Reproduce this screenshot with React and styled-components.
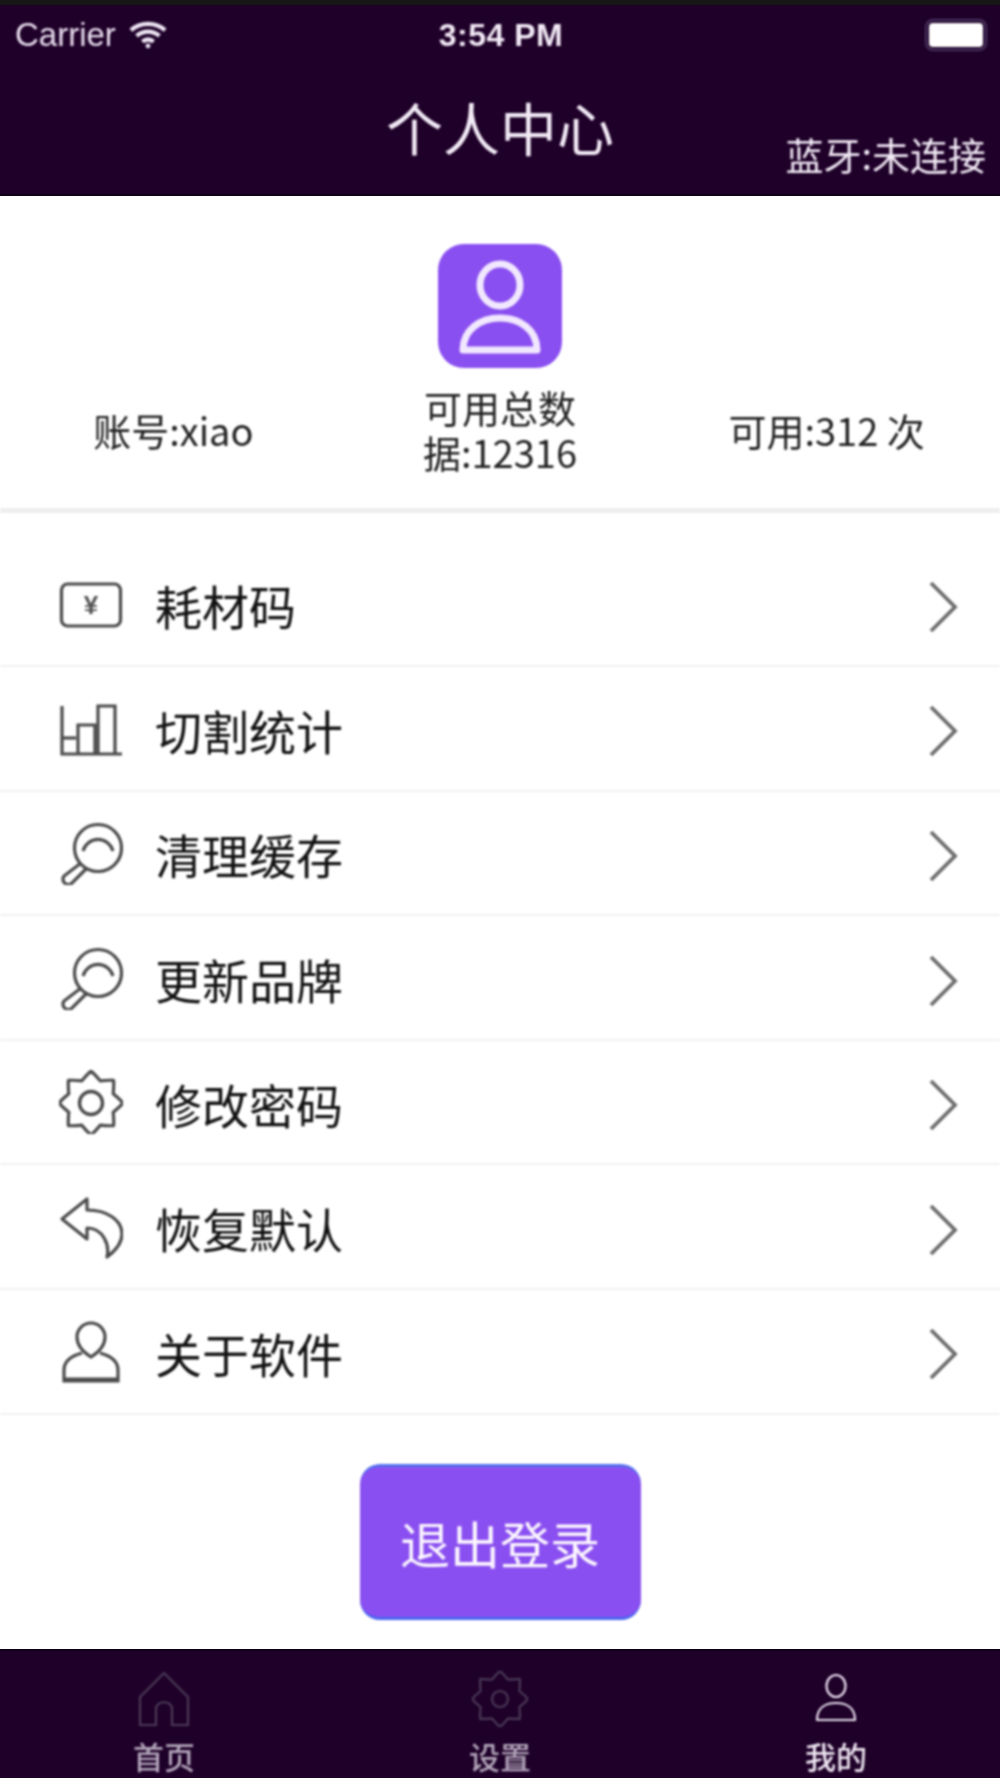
import React from 'react'
import styled, {createGlobalStyle, css} from 'styled-components'

const GlobalStyle = createGlobalStyle`
    html, body {
        margin: 0;
        padding: 0;
        background: #fff;
    }
    * {
        box-sizing: border-box;
    }
`

const CJK = `"Noto Sans CJK SC", "Liberation Sans", sans-serif`
const NAVY = '#1f0029'
const PURPLE = '#8a4ff0'

// the screenshot is an upscaled one, everything in it is a bit soft
const soft = css`
    filter: blur(0.9px);
`

const gearPath = (cx, cy, outer, inner, teeth) => {
    const step = (Math.PI * 2) / teeth
    const at = (r, a) => `${(cx + r * Math.cos(a)).toFixed(1)} ${(cy + r * Math.sin(a)).toFixed(1)}`
    const shoulder = inner + (outer - inner) * 0.6
    let d = ''
    for (let i = 0; i < teeth; i++) {
        const a = -Math.PI / 2 + i * step
        d += `${i === 0 ? 'M' : 'L'}${at(outer, a)} `
        d += `Q${at(shoulder, a + step * 0.18)} ${at(inner, a + step * 0.5)} `
        d += `Q${at(shoulder, a + step * 0.82)} ${at(outer, a + step)} `
    }
    return d + 'Z'
}

const TicketIcon = () => (
    <IconSvg viewBox="0 0 64 64">
        <rect x="2.5" y="12" width="59" height="42" rx="6" />
        <text x="32" y="42" textAnchor="middle" fontSize="26" fontWeight="700" fill="#555" stroke="none" fontFamily="Liberation Sans, sans-serif">¥</text>
    </IconSvg>
)

const BarsIcon = () => (
    <IconSvg viewBox="0 0 64 64">
        <path d="M3 10V58H63" />
        <path d="M3 42H17" />
        <path d="M19 58V29H36V58" />
        <path d="M39 58V10H56V58" />
    </IconSvg>
)

const SearchIcon = () => (
    <IconSvg viewBox="0 0 64 64">
        <circle cx="39" cy="27" r="23.5" />
        <path d="M24 30A15.5 15.5 0 0 1 54 30" />
        <path d="M22 42L5 55A5.5 5.5 0 0 0 12 63L27 48" />
    </IconSvg>
)

const GearIcon = () => (
    <IconSvg viewBox="0 0 64 64">
        <path d={gearPath(32, 33, 32, 24, 8)} strokeLinejoin="round" />
        <circle cx="32" cy="33" r="11.5" strokeWidth="3.4" />
    </IconSvg>
)

const BackIcon = () => (
    <IconSvg viewBox="0 0 64 64">
        <path d="M3 24L28 4V15C48 15 63 25 63 39C63 49 56 56 48 62C51 50 44 33 28 33V44Z" strokeLinejoin="round" />
    </IconSvg>
)

const PersonIcon = () => (
    <IconSvg viewBox="0 0 64 64">
        <path d="M32 38C24 33 18 27 18 18A14 14 0 0 1 46 18C46 27 40 33 32 38Z" />
        <path d="M23 34C12 37 5 42 5 51V62H59V51C59 42 52 37 41 34" />
        <path d="M5 60.5H59" strokeWidth="4" />
    </IconSvg>
)

const MENU = [
    {label: '耗材码', icon: <TicketIcon />},
    {label: '切割统计', icon: <BarsIcon />},
    {label: '清理缓存', icon: <SearchIcon />},
    {label: '更新品牌', icon: <SearchIcon />},
    {label: '修改密码', icon: <GearIcon />},
    {label: '恢复默认', icon: <BackIcon />},
    {label: '关于软件', icon: <PersonIcon />},
]

const App = () => {
    return (
        <Page>
            <GlobalStyle />
            <TopBar>
                <StatusBar>
                    <Carrier>
                        Carrier
                        <svg width="38" height="30" viewBox="0 0 40 30" fill="none" stroke="#efe6f5" strokeWidth="4.5">
                            <path d="M2 10C12 1 28 1 38 10" />
                            <path d="M8 16C15 10 25 10 32 16" />
                            <path d="M14 22C18 19 22 19 26 22" />
                            <circle cx="20" cy="26.5" r="2.5" fill="#efe6f5" stroke="none" />
                        </svg>
                    </Carrier>
                    <Clock>3:54 PM</Clock>
                    <Battery><BatteryLevel /></Battery>
                </StatusBar>
                <Title>个人中心</Title>
                <Bluetooth>蓝牙:未连接</Bluetooth>
            </TopBar>

            <Profile>
                <Avatar>
                    <svg width="124" height="124" viewBox="0 0 124 124" fill="none" stroke="#f1e8ff" strokeWidth="7">
                        <ellipse cx="62" cy="41" rx="20" ry="21" />
                        <path d="M25 106C25 86 42 74 62 74C82 74 99 86 99 106Z" strokeLinejoin="round" />
                    </svg>
                </Avatar>
                <Stats>
                    <Stat>账号:xiao</Stat>
                    <Stat><StatWrap>可用总数据:12316</StatWrap></Stat>
                    <Stat>可用:312 次</Stat>
                </Stats>
            </Profile>

            <Menu>
                {MENU.map(item => (
                    <MenuRow key={item.label}>
                        <IconSlot>{item.icon}</IconSlot>
                        <MenuLabel>{item.label}</MenuLabel>
                        <Chevron viewBox="0 0 30 52">
                            <path d="M3 2L27 26L3 50" />
                        </Chevron>
                    </MenuRow>
                ))}
            </Menu>

            <LogoutArea>
                <LogoutButton>退出登录</LogoutButton>
            </LogoutArea>

            <TabBar>
                <Tab>
                    <TabIcon viewBox="0 0 56 56" stroke="#4b3a57">
                        <path d="M28 2L4 26V54H20V38C20 29 36 29 36 38V54H52V26Z" strokeLinejoin="round" />
                    </TabIcon>
                    <TabLabel>首页</TabLabel>
                </Tab>
                <Tab>
                    <TabIcon viewBox="0 0 56 56" stroke="#4b3a57">
                        <path d={gearPath(28, 28, 28, 21, 8)} strokeLinejoin="round" />
                        <circle cx="28" cy="28" r="8" />
                    </TabIcon>
                    <TabLabel>设置</TabLabel>
                </Tab>
                <Tab>
                    <TabIcon viewBox="0 0 56 56" stroke="#eadff0" strokeWidth="6">
                        <ellipse cx="28" cy="15" rx="9.5" ry="11" />
                        <path d="M9 49C9 37 17 32 28 32C39 32 47 37 47 49Z" strokeLinejoin="round" />
                    </TabIcon>
                    <TabLabel $active>我的</TabLabel>
                </Tab>
            </TabBar>
        </Page>
    )
}

const Page = styled.div`
    width: 1000px;
    height: 1778px;
    display: flex;
    flex-direction: column;
    overflow: hidden;
    background: #fff;
    font-family: ${CJK};
`

const TopBar = styled.header`
    position: relative;
    height: 196px;
    flex: none;
    background: ${NAVY};
    border-top: 5px solid #171717;
    border-bottom: 2px solid #12001a;
    color: #f2eaf6;
`

const StatusBar = styled.div`
    ${soft}
    height: 52px;
    padding: 8px 13px 0 15px;
    display: grid;
    grid-template-columns: 1fr auto 1fr;
    align-items: center;
`

const Carrier = styled.div`
    display: flex;
    align-items: center;
    gap: 13px;
    font-family: "Liberation Sans", sans-serif;
    font-size: 33px;
    color: #e8dcee;
`

const Clock = styled.div`
    font-family: "Liberation Sans", sans-serif;
    font-size: 32px;
    font-weight: 700;
    letter-spacing: 0.5px;
`

const Battery = styled.div`
    justify-self: end;
    width: 62px;
    height: 32px;
    padding: 2px;
    border: 2px solid #4a3560;
    border-radius: 8px;
`

const BatteryLevel = styled.div`
    height: 100%;
    background: #fff;
    border-radius: 4px;
`

const Title = styled.h1`
    ${soft}
    margin: 34px 0 0;
    text-align: center;
    font-size: 57px;
    font-weight: 400;
    line-height: 70px;
`

const Bluetooth = styled.div`
    ${soft}
    position: absolute;
    right: 14px;
    top: 124px;
    font-size: 38px;
    line-height: 50px;
`

const Profile = styled.section`
    ${soft}
    flex: none;
    height: 317px;
    padding-top: 48px;
    display: flex;
    flex-direction: column;
    align-items: center;
    border-bottom: 5px solid #eeeeee;
`

const Avatar = styled.div`
    width: 124px;
    height: 124px;
    border-radius: 26px;
    background: ${PURPLE};
`

const Stats = styled.div`
    width: 100%;
    padding: 0 10px;
    margin-top: 16px;
    display: grid;
    grid-template-columns: repeat(3, 1fr);
    align-items: center;
`

const Stat = styled.div`
    display: flex;
    justify-content: center;
    text-align: center;
    font-size: 38px;
    line-height: 45px;
    color: #222;
`

const StatWrap = styled.span`
    width: 155px;
    word-break: break-all;
`

const Menu = styled.ul`
    ${soft}
    flex: none;
    list-style: none;
    margin: 29.5px 0 0;
    padding: 0;
`

const MenuRow = styled.li`
    height: 124.6px;
    padding: 0 42px 0 59px;
    display: flex;
    align-items: center;
    border-bottom: 2px solid #f1f1f1;
`

const IconSlot = styled.div`
    width: 64px;
    height: 64px;
    flex: none;
`

const IconSvg = styled.svg`
    display: block;
    width: 64px;
    height: 64px;
    fill: none;
    stroke: #4a4a4a;
    stroke-width: 3.2;
`

const MenuLabel = styled.span`
    flex: 1;
    margin: 2px 0 0 32px;
    font-size: 47px;
    color: #111;
`

const Chevron = styled.svg`
    width: 30px;
    height: 52px;
    margin-top: 6px;
    fill: none;
    stroke: #6c6c6c;
    stroke-width: 3.8;
`

const LogoutArea = styled.div`
    ${soft}
    flex: 1;
    padding-bottom: 29px;
    display: flex;
    align-items: flex-end;
    justify-content: center;
`

const LogoutButton = styled.button`
    width: 281px;
    height: 156px;
    padding: 0;
    border: none;
    border-top: 3px solid #5570ee;
    border-bottom: 3px solid #4a66f0;
    border-radius: 20px;
    background: ${PURPLE};
    color: #fbf6ff;
    font-family: ${CJK};
    font-size: 50px;
`

const TabBar = styled.nav`
    flex: none;
    height: 129px;
    padding-top: 20px;
    display: flex;
    justify-content: space-between;
    background: ${NAVY};
    border-top: 2px solid #10001a;
`

const Tab = styled.div`
    ${soft}
    width: 328px;
    display: flex;
    flex-direction: column;
    align-items: center;
`

const TabIcon = styled.svg`
    width: 56px;
    height: 56px;
    flex: none;
    fill: none;
    stroke-width: 2.2;
`

const TabLabel = styled.span`
    margin-top: 11.5px;
    font-size: 31px;
    font-weight: 500;
    line-height: 34px;
    color: ${props => props.$active ? '#efe6f3' : '#b3a6bb'};
`

export default App
